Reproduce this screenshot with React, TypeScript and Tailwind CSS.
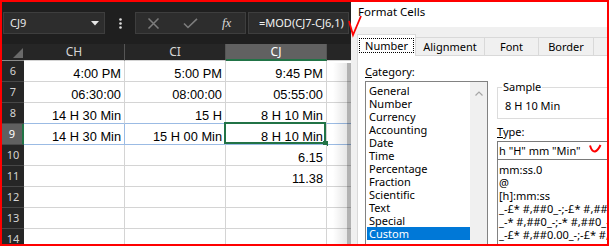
import React from "react";

type RowData = { n: number; v: [string, string, string] };

const ROWS: RowData[] = [
  { n: 6, v: ["4:00 PM", "5:00 PM", "9:45 PM"] },
  { n: 7, v: ["06:30:00", "08:00:00", "05:55:00"] },
  { n: 8, v: ["14 H 30 Min", "15 H", "8 H 10 Min"] },
  { n: 9, v: ["14 H 30 Min", "15 H 00 Min", "8 H 10 Min"] },
  { n: 10, v: ["", "", "6.15"] },
  { n: 11, v: ["", "", "11.38"] },
  { n: 12, v: ["", "", ""] },
  { n: 13, v: ["", "", ""] },
  { n: 14, v: ["", "", ""] },
];

const CATEGORIES = [
  "General",
  "Number",
  "Currency",
  "Accounting",
  "Date",
  "Time",
  "Percentage",
  "Fraction",
  "Scientific",
  "Text",
  "Special",
  "Custom",
];

const TYPES = [
  "mm:ss.0",
  "@",
  "[h]:mm:ss",
  '_-£* #,##0_-;-£* #,##0_-;_-£* "-"_-;_-@_-',
  '_-* #,##0_-;-* #,##0_-;_-* "-"_-;_-@_-',
  '_-£* #,##0.00_-;-£* #,##0.00_-;_-£* "-"??_-;_-@_-',
  '_-* #,##0.00_-;-* #,##0.00_-;_-* "-"??_-;_-@_-',
];

function SheetRow({ n, v }: RowData) {
  const sel = n === 9;
  const above = n === 8;
  const cellBase =
    "w-[101px] shrink-0 bg-white border-r border-b flex items-end justify-end pr-[3px] text-[12.8px] leading-[15px] text-black font-['Liberation_Sans',Arial,sans-serif] whitespace-nowrap overflow-visible";
  const bottom = sel || above ? "border-b-[#9bbbe4]" : "border-b-[#d4d4d4]";
  return (
    <div className="flex h-[21px] shrink-0">
      <div
        className={
          sel
            ? "w-[22px] shrink-0 bg-[#606060] text-white border-r-2 border-r-[#217346] border-b border-b-[#4a4a4a] flex items-center justify-center pt-[1px] text-[11px]"
            : "w-[22px] shrink-0 bg-[#262626] text-[#d4d4d4] border-b border-b-[#474747] flex items-center justify-center pt-[1px] text-[11px]"
        }
      >
        {n}
      </div>
      <div className={`${cellBase} ${bottom} ${sel ? "border-r-[#9bbbe4]" : "border-r-[#d4d4d4]"}`}>{v[0]}</div>
      <div className={`${cellBase} ${bottom} border-r-[#d4d4d4]`}>{v[1]}</div>
      <div className={`${cellBase} ${bottom} border-r-[#d4d4d4] relative`}>
        {v[2]}
        {sel && (
          <>
            <div className="absolute -left-[2px] -top-[2px] right-0 bottom-0 border-2 border-[#217346]" />
            <div className="absolute -right-[2px] -bottom-[2px] w-[5px] h-[5px] bg-[#217346]" />
          </>
        )}
      </div>
      <div className={`flex-1 bg-white border-b ${bottom}`} />
    </div>
  );
}

function ExcelPane() {
  return (
    <div className="relative w-[349px] shrink-0 flex flex-col overflow-hidden bg-[#1f1f1f] font-['Noto_Sans',sans-serif]">
      {/* formula bar */}
      <div className="h-[42px] shrink-0 flex items-center">
        <div className="ml-[1px] w-[102px] h-[22px] shrink-0 bg-[#2d2d2d] border border-[#3e3e3e] flex items-center justify-between pl-[6px] pr-[5px]">
          <span className="text-[11px] leading-[14px] text-[#e8e8e8]">CJ9</span>
          <svg width="8" height="5" viewBox="0 0 8 5">
            <path d="M0 0H8L4 4.5Z" fill="#e6e6e6" />
          </svg>
        </div>
        <div className="w-[30px] shrink-0 flex items-center justify-center">
          <svg width="3" height="11" viewBox="0 0 3 11">
            <circle cx="1.5" cy="1.5" r="1.3" fill="#e0e0e0" />
            <circle cx="1.5" cy="5.5" r="1.3" fill="#e0e0e0" />
            <circle cx="1.5" cy="9.5" r="1.3" fill="#e0e0e0" />
          </svg>
        </div>
        <div className="w-[111px] h-[22px] shrink-0 bg-[#2d2d2d] border border-[#3e3e3e] flex items-center pl-[11px]">
          <svg width="13" height="11" viewBox="0 0 13 11">
            <path d="M1.5 0.5L11.5 10.5M11.5 0.5L1.5 10.5" stroke="#7d7d7d" strokeWidth="1.5" fill="none" />
          </svg>
          <svg className="ml-[23px]" width="15" height="11" viewBox="0 0 15 11">
            <path d="M1 5.5L5 9.5L14 0.8" stroke="#7d7d7d" strokeWidth="1.6" fill="none" />
          </svg>
          <span className="ml-[24px] font-['Liberation_Serif',serif] italic text-[13px] leading-[14px] text-[#d8d8d8]">
            fx
          </span>
        </div>
        <div className="ml-[2px] mr-[2px] flex-1 h-[22px] bg-[#2d2d2d] border border-[#3e3e3e] flex items-center pl-[10px] text-[11px] text-[#f2f2f2] whitespace-nowrap overflow-hidden">
          =MOD(CJ7-CJ6,1)
        </div>
      </div>
      {/* column header */}
      <div className="h-[17px] shrink-0 flex">
        <div className="w-[22px] shrink-0 bg-[#262626] border-b border-b-[#8a8a8a] flex items-end justify-end pr-[1px] pb-[2px]">
          <svg width="10" height="10" viewBox="0 0 10 10">
            <path d="M10 0V10H0Z" fill="#6a6a6a" />
          </svg>
        </div>
        <div className="w-[101px] shrink-0 bg-[#262626] border-r border-r-[#555555] border-b border-b-[#d4d4d4] flex items-center justify-center text-[12px] text-[#d6d6d6]">
          CH
        </div>
        <div className="w-[101px] shrink-0 bg-[#262626] border-r border-r-[#555555] border-b border-b-[#d4d4d4] flex items-center justify-center text-[12px] text-[#d6d6d6]">
          CI
        </div>
        <div className="w-[101px] shrink-0 bg-[#616161] border-b-2 border-b-[#217346] border-r border-r-[#555555] flex items-center justify-center text-[12px] text-white">
          CJ
        </div>
        <div className="flex-1 bg-[#262626] border-b border-b-[#d4d4d4]" />
      </div>
      {ROWS.map((r) => (
        <SheetRow key={r.n} n={r.n} v={r.v} />
      ))}
      {/* dialog shadow */}
      <div className="absolute right-0 top-[61px] bottom-0 flex pointer-events-none">
        <div className="w-[14px] bg-linear-to-r from-transparent to-black/10" />
        <div className="w-[4px] bg-black/30" />
      </div>
    </div>
  );
}

function Dialog() {
  return (
    <div className="w-[256px] shrink-0 flex flex-col bg-[#f0f0f0] overflow-hidden font-['Noto_Sans',sans-serif] text-black text-[11px]">
      <div className="h-[25px] shrink-0 bg-white pl-[7px] pt-[2px] text-[11.5px] leading-[16px]">Format Cells</div>
      {/* tabs */}
      <div className="relative z-10 h-[28px] shrink-0 flex items-end pl-[6px]">
        <div className="w-[59px] h-[22px] -mb-[1px] shrink-0 bg-white border-t border-l border-r border-[#d9d9d9] flex items-start justify-center pt-[3px]">
          <span className="border border-dotted border-black px-[5px] leading-[13px]">Number</span>
        </div>
        <div className="w-[69px] h-[18px] shrink-0 border-t border-r border-[#d9d9d9] flex items-center justify-center pt-[1px]">
          Alignment
        </div>
        <div className="w-[54px] h-[18px] shrink-0 border-t border-r border-[#d9d9d9] flex items-center justify-center pt-[1px]">
          Font
        </div>
        <div className="w-[55px] h-[18px] shrink-0 border-t border-r border-[#d9d9d9] flex items-center justify-center pt-[1px]">
          Border
        </div>
        <div className="w-[40px] h-[18px] shrink-0 border-t border-r border-[#d9d9d9]" />
      </div>
      {/* panel */}
      <div className="ml-[6px] w-[300px] flex-1 bg-white border border-[#d9d9d9] flex pt-[8px] pl-[7px] gap-[9px]">
        <div className="w-[123px] shrink-0 flex flex-col">
          <div className="h-[16px] leading-[16px]">
            <span className="underline">C</span>ategory:
          </div>
          <div className="mt-[1px] flex-1 border border-[#828282] flex">
            <div className="flex-1 pl-[1px] pt-[2px] flex flex-col">
              {CATEGORIES.map((c) => (
                <div
                  key={c}
                  className={
                    c === "Custom"
                      ? "h-[13px] leading-[13px] pl-[2px] bg-[#0078d7] text-white"
                      : "h-[13px] leading-[13px] pl-[2px]"
                  }
                >
                  {c}
                </div>
              ))}
            </div>
            <div className="w-[17px] shrink-0 bg-[#f0f0f0] flex justify-center pt-[9px]">
              <svg width="8" height="5" viewBox="0 0 8 5">
                <path d="M0.5 4.5L4 1L7.5 4.5" stroke="#a6a6a6" strokeWidth="1.2" fill="none" />
              </svg>
            </div>
          </div>
        </div>
        <div className="w-[140px] shrink-0 flex flex-col">
          <div className="relative mt-[23px] h-[32px] border border-[#dcdcdc] pl-[7px] pt-[11px] leading-[14px]">
            <span className="absolute -top-[8px] left-[4px] bg-white px-[1px] leading-[14px]">Sample</span>
            8 H 10 Min
          </div>
          <div className="mt-[5px] h-[16px] leading-[16px]">
            <span className="underline">T</span>ype:
          </div>
          <div className="mt-[1px] h-[19px] border border-[#7a7a7a] pl-[1px] leading-[17px] whitespace-nowrap">
            h "H" mm "Min"
          </div>
          <div className="flex-1 border-l border-r border-b border-[#828282] pt-[3px] pl-[1px] overflow-hidden">
            {TYPES.map((t) => (
              <div key={t} className="h-[13px] leading-[13px] whitespace-nowrap">
                {t}
              </div>
            ))}
          </div>
        </div>
      </div>
    </div>
  );
}

export default function App() {
  return (
    <div className="relative w-[609px] h-[246px] border-2 border-[#ff0000] flex overflow-hidden bg-[#1f1f1f]">
      <ExcelPane />
      <Dialog />
      <svg
        className="absolute -left-[2px] -top-[2px] w-[609px] h-[246px] pointer-events-none"
        width="609"
        height="246"
        viewBox="0 0 609 246"
      >
        <path d="M349 21L353 35L361 16" stroke="#ff0000" strokeWidth="1.8" fill="none" />
        <path d="M590 145.5Q592 152 595 151.5Q598 150.5 600.5 145" stroke="#ff0000" strokeWidth="2" fill="none" />
      </svg>
    </div>
  );
}
